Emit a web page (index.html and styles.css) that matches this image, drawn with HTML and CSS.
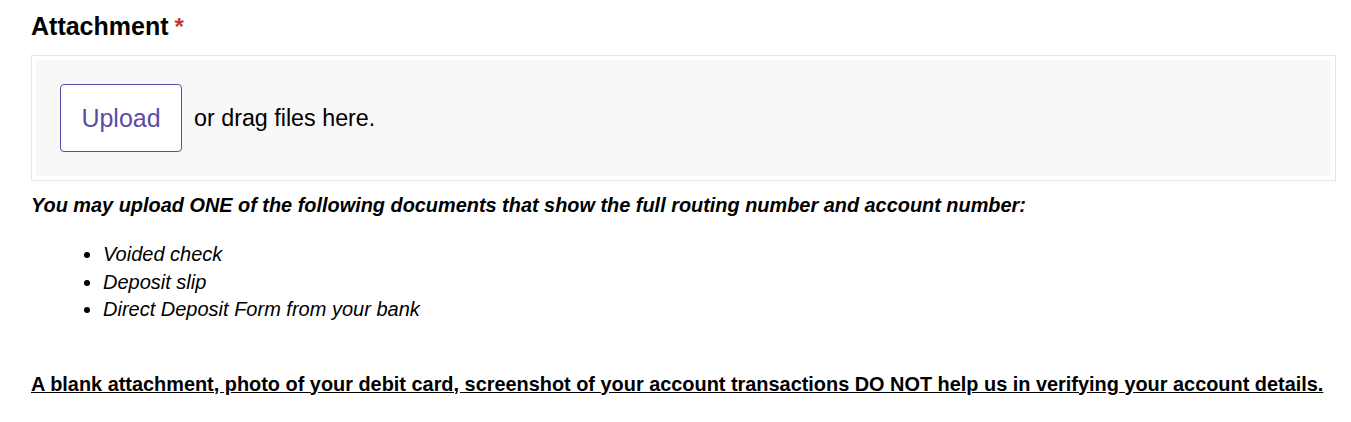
FILE: index.html
```html
<!DOCTYPE html>
<html lang="en">
<head>
  <meta charset="UTF-8" />
  <title>Attachment</title>
  <meta name="viewport" content="width=device-width, initial-scale=1.0">
  <link rel="stylesheet" href="styles.css">
</head>
<body>
  <div class="field">
    <!-- Titulo do campo com marcador de obrigatorio -->
    <h2 class="field-label">Attachment<span class="required">*</span></h2>

    <!-- Area de upload -->
    <div class="dropzone">
      <div class="dropzone-inner">
        <button type="button" class="upload-button">Upload</button>
        <span class="drag-text">or drag files here.</span>
      </div>
    </div>

    <p class="help-title">You may upload ONE of the following documents that show the full routing number and account number:</p>
    <ul class="doc-list">
      <li>Voided check</li>
      <li>Deposit slip</li>
      <li>Direct Deposit Form from your bank</li>
    </ul>

    <p class="warning">A blank attachment, photo of your debit card, screenshot of your account transactions DO NOT help us in verifying your account details.</p>
  </div>
</body>
</html>
```

FILE: styles.css
```css
body {
  margin: 0;
  font-family: "Liberation Sans", Arial, sans-serif;
  color: #000;
  background: #fff;
}

.field {
  width: 1305px;
  padding: 11px 0 0 31px;
}

.field-label {
  margin: 0;
  font-size: 25px;
  font-weight: bold;
  line-height: 30px;
}

.required {
  color: #c23934;
  margin-left: 6px;
  font-size: 24px;
}

.dropzone {
  margin-top: 13px;
  border: 1px solid #e5e5e5;
  padding: 4px;
}

.dropzone-inner {
  background-color: #f8f8f8;
  padding: 24px;
  display: flex;
  align-items: center;
  gap: 12px;
}

.upload-button {
  width: 122px;
  height: 68px;
  background: #fff;
  border: 1px solid #5b4ca8;
  border-radius: 4px;
  color: #5b4ca8;
  font-family: inherit;
  font-size: 25px;
  cursor: pointer;
}

.drag-text {
  font-size: 23.3px;
}

.help-title {
  margin: 13px 0 0;
  font-size: 19.9px;
  font-weight: bold;
  font-style: italic;
  line-height: 22px;
}

.doc-list {
  margin: 25px 0 0;
  padding-left: 72px;
  font-size: 20px;
  font-style: italic;
  line-height: 27.5px;
}

.warning {
  margin: 49px 0 0;
  font-size: 19.9px;
  font-weight: bold;
  text-decoration: underline;
  line-height: 22px;
}
```
